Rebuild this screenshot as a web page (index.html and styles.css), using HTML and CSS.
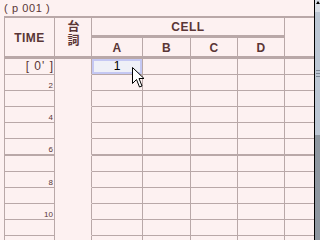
FILE: index.html
```html
<!DOCTYPE html>
<html lang="ja">
<head>
    <meta charset="UTF-8">
    <title>Time Sheet</title>
    <link rel="stylesheet" href="styles.css">
</head>
<body>
    <div class="page">
        <div class="sheet">
            <div class="caption">( p 001 )</div>

            <div class="head">
                <div class="h-time">TIME</div>
                <div class="h-serif"><span>台詞</span></div>
                <div class="h-cell">CELL</div>
                <div class="h-extra"></div>
                <div class="h-col">A</div>
                <div class="h-col">B</div>
                <div class="h-col">C</div>
                <div class="h-col">D</div>
            </div>

            <div class="body">
                <div class="row">
                    <div class="time first">[ 0' ]</div><div class="serif"></div>
                    <div class="cell sel">1</div><div class="cell"></div><div class="cell"></div><div class="cell"></div><div class="extra"></div>
                </div>
                <div class="row">
                    <div class="time">2</div><div class="serif"></div>
                    <div class="cell"></div><div class="cell"></div><div class="cell"></div><div class="cell"></div><div class="extra"></div>
                </div>
                <div class="row">
                    <div class="time"></div><div class="serif"></div>
                    <div class="cell"></div><div class="cell"></div><div class="cell"></div><div class="cell"></div><div class="extra"></div>
                </div>
                <div class="row">
                    <div class="time">4</div><div class="serif"></div>
                    <div class="cell"></div><div class="cell"></div><div class="cell"></div><div class="cell"></div><div class="extra"></div>
                </div>
                <div class="row">
                    <div class="time"></div><div class="serif"></div>
                    <div class="cell"></div><div class="cell"></div><div class="cell"></div><div class="cell"></div><div class="extra"></div>
                </div>
                <div class="row sec">
                    <div class="time">6</div><div class="serif"></div>
                    <div class="cell"></div><div class="cell"></div><div class="cell"></div><div class="cell"></div><div class="extra"></div>
                </div>
                <div class="row">
                    <div class="time"></div><div class="serif"></div>
                    <div class="cell"></div><div class="cell"></div><div class="cell"></div><div class="cell"></div><div class="extra"></div>
                </div>
                <div class="row">
                    <div class="time">8</div><div class="serif"></div>
                    <div class="cell"></div><div class="cell"></div><div class="cell"></div><div class="cell"></div><div class="extra"></div>
                </div>
                <div class="row">
                    <div class="time"></div><div class="serif"></div>
                    <div class="cell"></div><div class="cell"></div><div class="cell"></div><div class="cell"></div><div class="extra"></div>
                </div>
                <div class="row">
                    <div class="time">10</div><div class="serif"></div>
                    <div class="cell"></div><div class="cell"></div><div class="cell"></div><div class="cell"></div><div class="extra"></div>
                </div>
                <div class="row">
                    <div class="time"></div><div class="serif"></div>
                    <div class="cell"></div><div class="cell"></div><div class="cell"></div><div class="cell"></div><div class="extra"></div>
                </div>
                <div class="row">
                    <div class="time"></div><div class="serif"></div>
                    <div class="cell"></div><div class="cell"></div><div class="cell"></div><div class="cell"></div><div class="extra"></div>
                </div>
            </div>

            <!-- mouse pointer over cell A -->
            <svg class="pointer" width="13" height="22" viewBox="0 0 13 22">
                <path d="M0.5 0.5 L0.5 16.5 L4.5 12.5 L7.5 20 L10 19 L7 11.5 L12 11.5 Z" fill="#fff" stroke="#000" stroke-width="1"/>
            </svg>
        </div>

        <div class="scroll">
            <div class="scroll-up"></div>
            <div class="scroll-thumb"><span></span><span></span><span></span></div>
            <div class="scroll-track"></div>
        </div>
    </div>
</body>
</html>
```

FILE: styles.css
```css
body {
    margin: 0;
    background-color: #fdf1f1;
    font-family: 'Liberation Sans', Arial, sans-serif;
    color: #5a3636;
}

.page {
    display: flex;
    width: 320px;
    height: 240px;
    overflow: hidden;
}

.sheet {
    position: relative;
    width: 314px;
    padding-left: 4px;
    box-sizing: border-box;
}

.caption {
    height: 16px;
    line-height: 16px;
    font-size: 11px;
    letter-spacing: 0.6px;
}

/* header */
.head {
    display: grid;
    grid-template-columns: 50px 37px 51px 48px 47px 47px 29px;
    grid-template-rows: 20px 21px;
    border-top: 2px solid #b9a8a8;
    border-left: 1px solid #b9a8a8;
}

.head > div {
    box-sizing: border-box;
    border-right: 1px solid #b9a8a8;
    border-bottom: 3px solid #b9a8a8;
    display: flex;
    align-items: center;
    justify-content: center;
    font-weight: bold;
    font-size: 12px;
    letter-spacing: 0.5px;
}

.h-time {
    grid-row: 1 / 3;
    grid-column: 1;
    padding-top: 1px;
}

.head > .h-serif {
    grid-row: 1 / 3;
    grid-column: 2;
    align-items: flex-start;
    padding-top: 2px;
    font-family: 'Noto Sans CJK JP', sans-serif;
    font-size: 12px;
    letter-spacing: 2px;
}

.h-serif span {
    writing-mode: vertical-rl;
    line-height: 14px;
}

.h-cell {
    grid-row: 1;
    grid-column: 3 / 7;
    padding-top: 1px;
}

.head > .h-extra {
    grid-row: 1 / 3;
    grid-column: 7;
    border-right: none;
}

.h-col {
    grid-row: 2;
    padding-top: 1px;
}

/* body rows */
.body {
    border-left: 1px solid #b9a8a8;
}

.row {
    display: grid;
    grid-template-columns: 50px 37px 51px 48px 47px 47px 29px;
    height: 16px;
}

.row > div {
    box-sizing: border-box;
    border-bottom: 1px solid #b9a8a8;
    border-right: 1px solid #b9a8a8;
}

.row.sec {
    height: 17px;
}

.row.sec > div {
    border-bottom-width: 2px;
}

.row > .serif {
    border-bottom-color: transparent;
}

.row > .extra {
    border-right: none;
}

.time {
    display: flex;
    align-items: flex-end;
    justify-content: flex-end;
    padding-right: 1px;
    font-size: 8px;
    line-height: 9px;
}

.time.first {
    align-items: center;
    font-size: 12px;
    letter-spacing: 1px;
    padding-right: 0;
}

.cell.sel {
    background-color: #eff0f7;
    box-shadow: inset 0 0 0 2px #c5c8f3;
    color: #000;
    font-size: 12px;
    line-height: 15px;
    text-align: center;
}

.pointer {
    position: absolute;
    left: 132px;
    top: 67px;
}

/* scrollbar */
.scroll {
    width: 6px;
    border-left: 1px solid #000;
    display: flex;
    flex-direction: column;
}

.scroll-up {
    height: 12px;
    background-color: #d9dee6;
    position: relative;
}

.scroll-up::before {
    content: '';
    position: absolute;
    left: 1px;
    top: 1px;
    border-left: 2px solid transparent;
    border-right: 2px solid transparent;
    border-bottom: 3px solid #000;
}

.scroll-thumb {
    height: 123px;
    background-color: #bcc6d3;
    display: flex;
    flex-direction: column;
    justify-content: center;
    gap: 2px;
    padding-left: 1px;
}

.scroll-thumb span {
    height: 1px;
    width: 4px;
    background-color: #7c8694;
}

.scroll-track {
    flex: 1;
    background-color: #8e969f;
}
```
